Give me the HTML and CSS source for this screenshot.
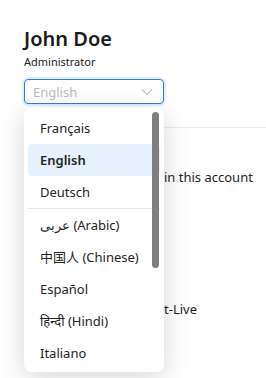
FILE: index.html
```html
<!DOCTYPE html>
<html lang="en">
<head>
    <meta charset="UTF-8">
    <meta name="viewport" content="width=device-width, initial-scale=1.0">
    <title>Profile</title>
    <link rel="stylesheet" href="styles.css">
</head>
<body>
    <div class="page">
        <div class="name">John Doe</div>
        <div class="role">Administrator</div>

        <div class="lang-picker">
            <div class="select">
                <span class="select-value">English</span>
                <svg class="chevron" width="12" height="8" viewBox="0 0 12 8">
                    <path d="M1 1.5 L6 6.5 L11 1.5" fill="none" stroke="#c4c4c4" stroke-width="1.2"/>
                </svg>
            </div>

            <div class="menu">
                <div class="menu-list">
                    <div class="item">Français</div>
                    <div class="item active">English</div>
                    <div class="item">Deutsch</div>
                    <div class="divider"></div>
                    <div class="item">عربى (Arabic)</div>
                    <div class="item">中国人 (Chinese)</div>
                    <div class="item">Español</div>
                    <div class="item hindi">हिन्दी (Hindi)</div>
                    <div class="item">Italiano</div>
                    <div class="item">Português</div>
                </div>
                <div class="thumb"></div>
            </div>
        </div>

        <div class="section">
            <div class="row">
                <span class="row-label">Language used</span>
                <span class="row-text">in this account</span>
            </div>
            <div class="row second">
                <span class="row-label">Sign in with Microsof</span>
                <span class="row-text">t-Live</span>
            </div>
        </div>
    </div>
</body>
</html>
```

FILE: styles.css
```css
body { margin: 0; min-height: 378px; background: #fff; color: #1f1f1f; font-family: "Noto Sans", "Noto Sans Devanagari", "Lohit Devanagari", "Noto Sans CJK SC", sans-serif; }
.page { padding: 27px 0 0 24px; }
.name { font-size: 20px; font-weight: 600; line-height: 24px; color: #1b1b1b; }
.role { font-size: 11px; line-height: 16px; margin-top: 3px; color: #222; }

.lang-picker { position: relative; width: 140px; margin-top: 9px; }
.select {
    height: 23px;
    border: 1px solid #2b7de9;
    border-radius: 4px;
    box-shadow: 0 0 0 2px #e3efff;
    display: flex;
    align-items: center;
    justify-content: space-between;
    padding: 0 10px 0 8px;
}
.select-value { font-size: 13px; color: #bdbdbd; }
.chevron { display: block; }

.menu {
    position: absolute;
    top: 29px;
    left: 0;
    width: 140px;
    height: 264px;
    background: #fff;
    border-radius: 8px;
    box-shadow: 0 6px 28px rgba(0, 0, 0, 0.16);
    overflow: hidden;
    z-index: 2;
}
.menu-list { padding: 4px 4px 0 4px; }
.item {
    height: 32px;
    line-height: 32px;
    padding-left: 12px;
    font-size: 13px;
    color: #242424;
    border-radius: 4px;
    white-space: nowrap;
}
.item.active { background: #e5f1fc; font-weight: 600; }
.divider { height: 1px; background: #e6e6e6; }
.thumb {
    position: absolute;
    top: 4px;
    right: 5px;
    width: 7px;
    height: 156px;
    border-radius: 4px;
    background: #7f7f7f;
}

.section { margin-top: 23px; border-top: 1px solid #ebebeb; padding-top: 40px; }
.row { display: grid; grid-template-columns: 140px 1fr; font-size: 13px; line-height: 18px; color: #1f1f1f; white-space: nowrap; }
.row.second { margin-top: 114px; }
.row-label { overflow: hidden; }
```
